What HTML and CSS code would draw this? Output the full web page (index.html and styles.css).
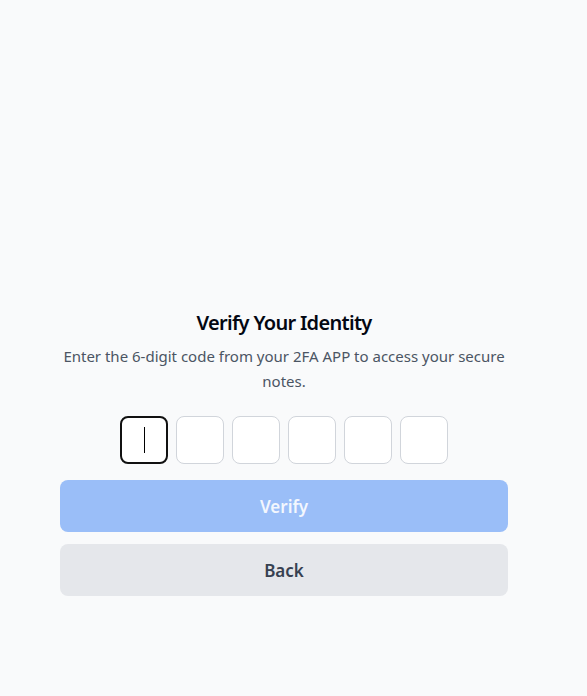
FILE: index.html
```html
<!DOCTYPE html>
<html>
<head>
<meta charset="utf-8">
<link rel="stylesheet" href="styles.css">
</head>
<body>
<main class="page">
  <section class="card">
    <h1 class="title">Verify Your Identity</h1>
    <p class="desc">Enter the 6-digit code from your 2FA APP to access your secure notes.</p>
    <div class="otp">
      <div class="box focus"><span class="caret"></span></div>
      <div class="box"></div>
      <div class="box"></div>
      <div class="box"></div>
      <div class="box"></div>
      <div class="box"></div>
    </div>
    <button class="btn primary">Verify</button>
    <button class="btn secondary">Back</button>
  </section>
</main>
</body>
</html>
```
FILE: styles.css
```css
* { box-sizing: border-box; }
html, body { margin: 0; padding: 0; }
body {
  background: #f9fafb;
  font-family: "Noto Sans", "Open Sans", sans-serif;
  width: 587px;
  height: 696px;
}
.page {
  padding: 309px 0 0 60px;
}
.card {
  width: 448px;
  display: flex;
  flex-direction: column;
  align-items: stretch;
  text-align: center;
}
.title {
  margin: 0;
  font-size: 20px;
  line-height: 28px;
  font-weight: 600;
  letter-spacing: -0.7px;
  color: #030712;
}
.desc {
  margin: 7px 0 0;
  font-size: 15px;
  line-height: 25px;
  color: #4b5563;
}
.otp {
  margin-top: 22px;
  display: flex;
  justify-content: center;
  gap: 8px;
}
.box {
  width: 48px;
  height: 48px;
  background: #fff;
  border: 1px solid #d1d5db;
  border-radius: 8px;
  display: flex;
  align-items: center;
  justify-content: center;
}
.box.focus {
  border: 2px solid #111;
}
.caret {
  width: 1px;
  height: 26px;
  background: #000;
}
.btn {
  height: 52px;
  border: none;
  border-radius: 8px;
  font-family: inherit;
  font-size: 17px;
  font-weight: 600;
}
.primary {
  margin-top: 16px;
  background: #9abef8;
  color: #f3f7fe;
}
.secondary {
  margin-top: 12px;
  background: #e5e7eb;
  color: #374151;
}
```
